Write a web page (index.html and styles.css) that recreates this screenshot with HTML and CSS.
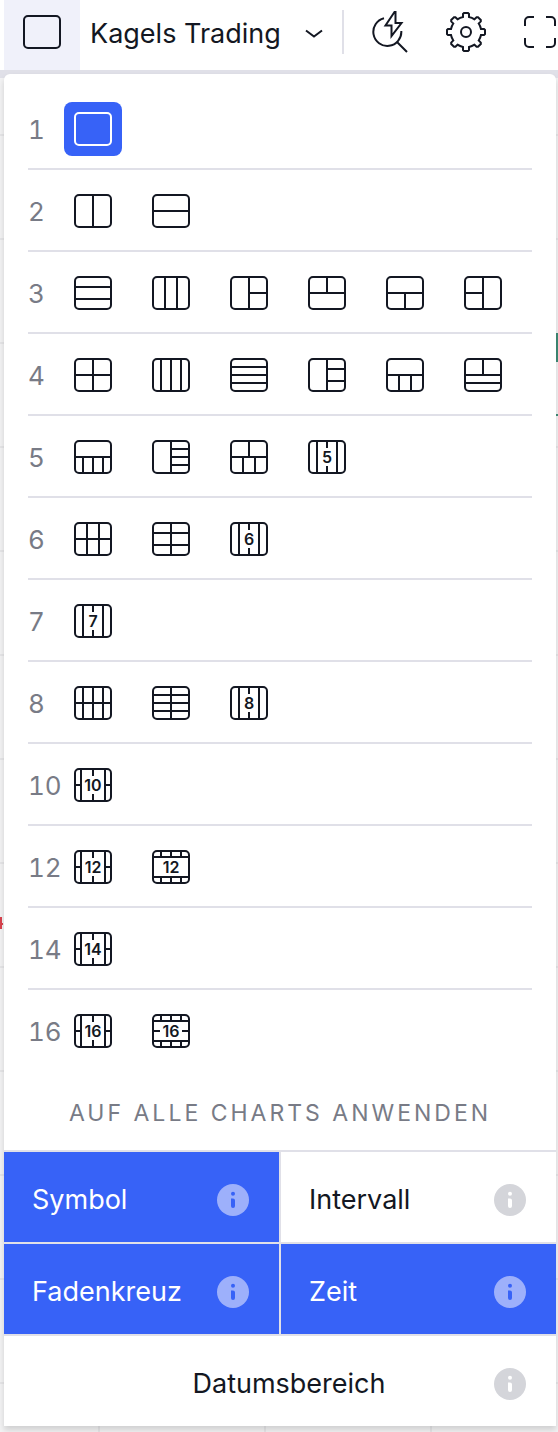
FILE: index.html
```
<!DOCTYPE html>
<html lang="de">
<head>
    <meta charset="UTF-8">
    <meta name="viewport" content="width=device-width, initial-scale=1.0">
    <title>Kagels Trading</title>
    <link rel="stylesheet" href="styles.css">
</head>
<body>
    <header class="toolbar">
        <button class="layout-toggle" aria-label="Layout" aria-expanded="true">
            <svg class="icon" width="38" height="34"><rect x="1" y="1" width="36" height="32" rx="4"/></svg>
        </button>
        <button class="layout-name">
            <span>Kagels Trading</span>
            <svg class="icon" width="18" height="10"><path d="M1 1.500l8 6 8-6"/></svg>
        </button>
        <div class="separator"></div>
        <button class="tool" aria-label="Schnellsuche">
            <svg class="icon" width="36" height="42"><path d="M12 7.300A14 14 0 1 0 29.300 20M25 31l10 10M22.500 1L13.500 14.500H19.500V25L29.500 12H23.500V1z"/></svg>
        </button>
        <button class="tool" aria-label="Einstellungen">
            <svg class="icon" width="40" height="40">
                <path d="M17 5V2l1-1h4l1 1v3A15 15 0 0 1 28.500 7.300l2.100-2.100h1.400l2.800 2.800v1.400l-2.100 2.100A15 15 0 0 1 35 17h3l1 1v4l-1 1h-3A15 15 0 0 1 32.700 28.500l2.100 2.100v1.400l-2.800 2.800h-1.400l-2.100-2.100A15 15 0 0 1 23 35v3l-1 1h-4l-1-1v-3A15 15 0 0 1 11.500 32.700l-2.100 2.100H8l-2.800-2.800v-1.400l2.100-2.100A15 15 0 0 1 5 23H2l-1-1v-4l1-1h3A15 15 0 0 1 7.300 11.500l-2.100-2.100V8l2.800-2.800h1.400l2.100 2.100A15 15 0 0 1 17 5z"/>
                <circle cx="20" cy="20" r="5"/>
            </svg>
        </button>
        <button class="tool" aria-label="Vollbild">
            <svg class="icon" width="32" height="32"><path d="M1 10V5a4 4 0 0 1 4-4h5M22 1h5a4 4 0 0 1 4 4v5M31 22v5a4 4 0 0 1-4 4h-5M10 31H5a4 4 0 0 1-4-4v-5"/></svg>
        </button>
    </header>

    <main class="chart">
        <div class="mark candle-up"></div>
        <div class="mark price-line"></div>
        <div class="mark candle-down"></div>
        <div class="mark candle-tick"></div>

        <div class="menu">
            <div class="layouts">
                <div class="row">
                    <span class="count">1</span>
                    <button class="layout active" aria-label="1 Chart"><svg class="icon" width="38" height="34"><rect x="1" y="1" width="36" height="32" rx="4"/></svg></button>
                </div>
                <div class="row">
                    <span class="count">2</span>
                    <button class="layout" aria-label="2 Spalten"><svg class="icon" width="38" height="34"><rect x="1" y="1" width="36" height="32" rx="4"/><path d="M19 1v32"/></svg></button>
                    <button class="layout" aria-label="2 Zeilen"><svg class="icon" width="38" height="34"><rect x="1" y="1" width="36" height="32" rx="4"/><path d="M1 17h36"/></svg></button>
                </div>
                <div class="row">
                    <span class="count">3</span>
                    <button class="layout" aria-label="3 Zeilen"><svg class="icon" width="38" height="34"><rect x="1" y="1" width="36" height="32" rx="4"/><path d="M1 11h36M1 23h36"/></svg></button>
                    <button class="layout" aria-label="3 Spalten"><svg class="icon" width="38" height="34"><rect x="1" y="1" width="36" height="32" rx="4"/><path d="M13 1v32M25 1v32"/></svg></button>
                    <button class="layout" aria-label="1 links, 2 rechts"><svg class="icon" width="38" height="34"><rect x="1" y="1" width="36" height="32" rx="4"/><path d="M19 1v32M19 17h18"/></svg></button>
                    <button class="layout" aria-label="2 oben, 1 unten"><svg class="icon" width="38" height="34"><rect x="1" y="1" width="36" height="32" rx="4"/><path d="M1 17h36M19 1v16"/></svg></button>
                    <button class="layout" aria-label="1 oben, 2 unten"><svg class="icon" width="38" height="34"><rect x="1" y="1" width="36" height="32" rx="4"/><path d="M1 17h36M19 17v16"/></svg></button>
                    <button class="layout" aria-label="2 links, 1 rechts"><svg class="icon" width="38" height="34"><rect x="1" y="1" width="36" height="32" rx="4"/><path d="M19 1v32M1 17h18"/></svg></button>
                </div>
                <div class="row">
                    <span class="count">4</span>
                    <button class="layout" aria-label="2 mal 2"><svg class="icon" width="38" height="34"><rect x="1" y="1" width="36" height="32" rx="4"/><path d="M19 1v32M1 17h36"/></svg></button>
                    <button class="layout" aria-label="4 Spalten"><svg class="icon" width="38" height="34"><rect x="1" y="1" width="36" height="32" rx="4"/><path d="M9 1v32M19 1v32M29 1v32"/></svg></button>
                    <button class="layout" aria-label="4 Zeilen"><svg class="icon" width="38" height="34"><rect x="1" y="1" width="36" height="32" rx="4"/><path d="M1 9h36M1 17h36M1 25h36"/></svg></button>
                    <button class="layout" aria-label="1 links, 3 rechts"><svg class="icon" width="38" height="34"><rect x="1" y="1" width="36" height="32" rx="4"/><path d="M19 1v32M19 11h18M19 23h18"/></svg></button>
                    <button class="layout" aria-label="1 oben, 3 unten"><svg class="icon" width="38" height="34"><rect x="1" y="1" width="36" height="32" rx="4"/><path d="M1 17h36M13 17v16M25 17v16"/></svg></button>
                    <button class="layout" aria-label="2 oben, 2 Zeilen unten"><svg class="icon" width="38" height="34"><rect x="1" y="1" width="36" height="32" rx="4"/><path d="M1 17h36M1 25h36M19 1v16"/></svg></button>
                </div>
                <div class="row">
                    <span class="count">5</span>
                    <button class="layout" aria-label="1 oben, 4 unten"><svg class="icon" width="38" height="34"><rect x="1" y="1" width="36" height="32" rx="4"/><path d="M1 17h36M9 17v16M19 17v16M29 17v16"/></svg></button>
                    <button class="layout" aria-label="1 links, 4 rechts"><svg class="icon" width="38" height="34"><rect x="1" y="1" width="36" height="32" rx="4"/><path d="M19 1v32M19 9h18M19 17h18M19 25h18"/></svg></button>
                    <button class="layout" aria-label="2 oben, 3 unten"><svg class="icon" width="38" height="34"><rect x="1" y="1" width="36" height="32" rx="4"/><path d="M1 17h36M19 1v16M13 17v16M25 17v16"/></svg></button>
                    <button class="layout" aria-label="5 Spalten"><svg class="icon" width="38" height="34"><rect x="1" y="1" width="36" height="32" rx="4"/><path d="M9 1v32M29 1v32M19 1v7M19 26v7"/><text x="19" y="23">5</text></svg></button>
                </div>
                <div class="row">
                    <span class="count">6</span>
                    <button class="layout" aria-label="3 mal 2"><svg class="icon" width="38" height="34"><rect x="1" y="1" width="36" height="32" rx="4"/><path d="M13 1v32M25 1v32M1 17h36"/></svg></button>
                    <button class="layout" aria-label="2 mal 3"><svg class="icon" width="38" height="34"><rect x="1" y="1" width="36" height="32" rx="4"/><path d="M19 1v32M1 11h36M1 23h36"/></svg></button>
                    <button class="layout" aria-label="6 Spalten"><svg class="icon" width="38" height="34"><rect x="1" y="1" width="36" height="32" rx="4"/><path d="M9 1v32M29 1v32M19 1v7M19 26v7"/><text x="19" y="23">6</text></svg></button>
                </div>
                <div class="row">
                    <span class="count">7</span>
                    <button class="layout" aria-label="7 Spalten"><svg class="icon" width="38" height="34"><rect x="1" y="1" width="36" height="32" rx="4"/><path d="M9 1v32M29 1v32M19 1v7M19 26v7"/><text x="19" y="23">7</text></svg></button>
                </div>
                <div class="row">
                    <span class="count">8</span>
                    <button class="layout" aria-label="4 mal 2"><svg class="icon" width="38" height="34"><rect x="1" y="1" width="36" height="32" rx="4"/><path d="M9 1v32M19 1v32M29 1v32M1 17h36"/></svg></button>
                    <button class="layout" aria-label="2 mal 4"><svg class="icon" width="38" height="34"><rect x="1" y="1" width="36" height="32" rx="4"/><path d="M19 1v32M1 9h36M1 17h36M1 25h36"/></svg></button>
                    <button class="layout" aria-label="8 Spalten"><svg class="icon" width="38" height="34"><rect x="1" y="1" width="36" height="32" rx="4"/><path d="M9 1v32M29 1v32M19 1v7M19 26v7"/><text x="19" y="23">8</text></svg></button>
                </div>
                <div class="row">
                    <span class="count">10</span>
                    <button class="layout" aria-label="10 Charts"><svg class="icon" width="38" height="34"><rect x="1" y="1" width="36" height="32" rx="4"/><path d="M7 1v32M31 1v32M19 1v7M19 26v7M1 17h6M31 17h6"/><text x="19" y="23">10</text></svg></button>
                </div>
                <div class="row">
                    <span class="count">12</span>
                    <button class="layout" aria-label="12 Charts, Spalten"><svg class="icon" width="38" height="34"><rect x="1" y="1" width="36" height="32" rx="4"/><path d="M7 1v32M31 1v32M19 1v7M19 26v7M1 17h6M31 17h6"/><text x="19" y="23">12</text></svg></button>
                    <button class="layout" aria-label="12 Charts, Zeilen"><svg class="icon" width="38" height="34"><rect x="1" y="1" width="36" height="32" rx="4"/><path d="M1 7h36M1 27h36M9 1v6M19 1v6M29 1v6M9 27v6M19 27v6M29 27v6"/><text x="19" y="23">12</text></svg></button>
                </div>
                <div class="row">
                    <span class="count">14</span>
                    <button class="layout" aria-label="14 Charts"><svg class="icon" width="38" height="34"><rect x="1" y="1" width="36" height="32" rx="4"/><path d="M7 1v32M31 1v32M19 1v7M19 26v7M1 17h6M31 17h6"/><text x="19" y="23">14</text></svg></button>
                </div>
                <div class="row">
                    <span class="count">16</span>
                    <button class="layout" aria-label="16 Charts, Spalten"><svg class="icon" width="38" height="34"><rect x="1" y="1" width="36" height="32" rx="4"/><path d="M7 1v32M31 1v32M19 1v7M19 26v7M1 17h6M31 17h6"/><text x="19" y="23">16</text></svg></button>
                    <button class="layout" aria-label="16 Charts, Zeilen"><svg class="icon" width="38" height="34"><rect x="1" y="1" width="36" height="32" rx="4"/><path d="M1 7h36M1 27h36M9 1v6M19 1v6M29 1v6M9 27v6M19 27v6M29 27v6M1 17h7M30 17h7"/><text x="19" y="23">16</text></svg></button>
                </div>
            </div>

            <h2>Auf alle Charts anwenden</h2>

            <div class="options">
                <button class="option active" aria-pressed="true">
                    <span>Symbol</span>
                    <svg class="info" width="32" height="32"><circle cx="16" cy="16" r="16"/><path d="M16 7.800a2 2 0 1 1 0 4 2 2 0 0 1 0-4zM14 14.500h2a2 2 0 0 1 2 2V22a2 2 0 0 1-4 0z"/></svg>
                </button>
                <button class="option" aria-pressed="false">
                    <span>Intervall</span>
                    <svg class="info" width="32" height="32"><circle cx="16" cy="16" r="16"/><path d="M16 7.800a2 2 0 1 1 0 4 2 2 0 0 1 0-4zM14 14.500h2a2 2 0 0 1 2 2V22a2 2 0 0 1-4 0z"/></svg>
                </button>
                <button class="option active" aria-pressed="true">
                    <span>Fadenkreuz</span>
                    <svg class="info" width="32" height="32"><circle cx="16" cy="16" r="16"/><path d="M16 7.800a2 2 0 1 1 0 4 2 2 0 0 1 0-4zM14 14.500h2a2 2 0 0 1 2 2V22a2 2 0 0 1-4 0z"/></svg>
                </button>
                <button class="option active" aria-pressed="true">
                    <span>Zeit</span>
                    <svg class="info" width="32" height="32"><circle cx="16" cy="16" r="16"/><path d="M16 7.800a2 2 0 1 1 0 4 2 2 0 0 1 0-4zM14 14.500h2a2 2 0 0 1 2 2V22a2 2 0 0 1-4 0z"/></svg>
                </button>
                <button class="option wide" aria-pressed="false">
                    <span>Datumsbereich</span>
                    <svg class="info" width="32" height="32"><circle cx="16" cy="16" r="16"/><path d="M16 7.800a2 2 0 1 1 0 4 2 2 0 0 1 0-4zM14 14.500h2a2 2 0 0 1 2 2V22a2 2 0 0 1-4 0z"/></svg>
                </button>
            </div>
        </div>
    </main>
</body>
</html>
```

FILE: styles.css
```
* {
    box-sizing: border-box;
}
body {
    margin: 0;
    font-family: Inter, "Liberation Sans", sans-serif;
    font-size: 27px;
    line-height: 32px;
    color: #131722;
    background-color: #fff;
}
button {
    border: none;
    padding: 0;
    background: none;
    color: inherit;
    font: inherit;
    cursor: pointer;
}
svg {
    display: block;
    flex: none;
}
.icon {
    fill: none;
    stroke: currentColor;
    stroke-width: 2;
}
.icon text {
    fill: currentColor;
    stroke: none;
    font-size: 16px;
    font-weight: 600;
    text-anchor: middle;
}

/* Toolbar */
.toolbar {
    display: flex;
    align-items: center;
    height: 78px;
    padding-left: 4px;
    border-bottom: 8px solid #e0e0e8;
    overflow: hidden;
}
.toolbar button {
    flex: none;
}
.layout-toggle {
    display: flex;
    align-items: center;
    justify-content: center;
    width: 76px;
    height: 70px;
    padding-bottom: 6px;
    background-color: #f0f1fa;
}
.layout-name {
    display: flex;
    align-items: center;
    gap: 24px;
    padding: 0 19px 3px 10px;
}
.separator {
    flex: none;
    width: 2px;
    height: 44px;
    margin: 0 28px 6px 0;
    background-color: #e0e0e8;
}
.tool {
    margin-right: 38px;
    padding-bottom: 6px;
}

/* Chart behind the menu */
.chart {
    display: flow-root;
    position: relative;
    padding: 0 2px 6px 4px;
    background-color: #f3f3f4;
    background-image:
        linear-gradient(#e6e6e8 2px, transparent 2px),
        linear-gradient(90deg, #e6e6e8 2px, transparent 2px);
    background-size: 100% 104px, 166px 100%;
    background-position: 0 56px, 98px 0;
}
.mark {
    position: absolute;
}
.candle-up {
    top: 255px;
    right: 0;
    width: 2px;
    height: 29px;
    background-color: #3d8b76;
}
.price-line {
    top: 336px;
    right: 0;
    width: 2px;
    height: 2px;
    background-color: #3d8b76;
}
.candle-down {
    top: 839px;
    left: 0;
    width: 2px;
    height: 12px;
    background-color: #d9434e;
}
.candle-tick {
    top: 845px;
    left: 2px;
    width: 1px;
    height: 2px;
    background-color: #d9434e;
}

/* Layout menu */
.menu {
    position: relative;
    margin-top: -4px;
    padding-top: 14px;
    border-radius: 6px 6px 0 0;
    background-color: #fff;
    box-shadow: 0 4px 6px rgba(0, 0, 0, 0.15);
}
.layouts {
    padding: 0 24px;
}
.row {
    display: flex;
    align-items: center;
    gap: 20px;
    height: 82px;
    padding-top: 2px;
    border-bottom: 2px solid #e0e0e8;
}
.row:last-child {
    border-bottom-color: transparent;
}
.count {
    width: 16px;
    padding-top: 2px;
    color: #787b86;
    font-size: 26px;
    font-variant-numeric: tabular-nums;
    white-space: nowrap;
}
.layout {
    flex: none;
    padding: 10px;
    border-radius: 8px;
}
.layout.active {
    background-color: #3762f7;
    color: #fff;
}
h2 {
    margin: 0;
    padding: 25px 0 21px;
    border-bottom: 2px solid #e0e0e8;
    color: #787b86;
    font-size: 23px;
    font-weight: 400;
    letter-spacing: 3px;
    text-align: center;
    text-transform: uppercase;
}

/* Sync options */
.options {
    display: grid;
    grid-template-columns: 1fr 1fr;
    gap: 2px;
    background-color: #e0e0e8;
}
.option {
    display: flex;
    align-items: center;
    justify-content: space-between;
    height: 90px;
    padding: 5px 30px 0 28px;
    background-color: #fff;
}
.option.active {
    background-color: #3762f7;
    color: #fff;
}
.option.wide {
    grid-column: span 2;
}
.option.wide span {
    flex: 1;
    padding-left: 52px;
}
.info {
    fill: #d4d5da;
}
.info path {
    fill: #fff;
}
.active .info {
    fill: #9db0fb;
}
.active .info path {
    fill: #3762f7;
}
```
